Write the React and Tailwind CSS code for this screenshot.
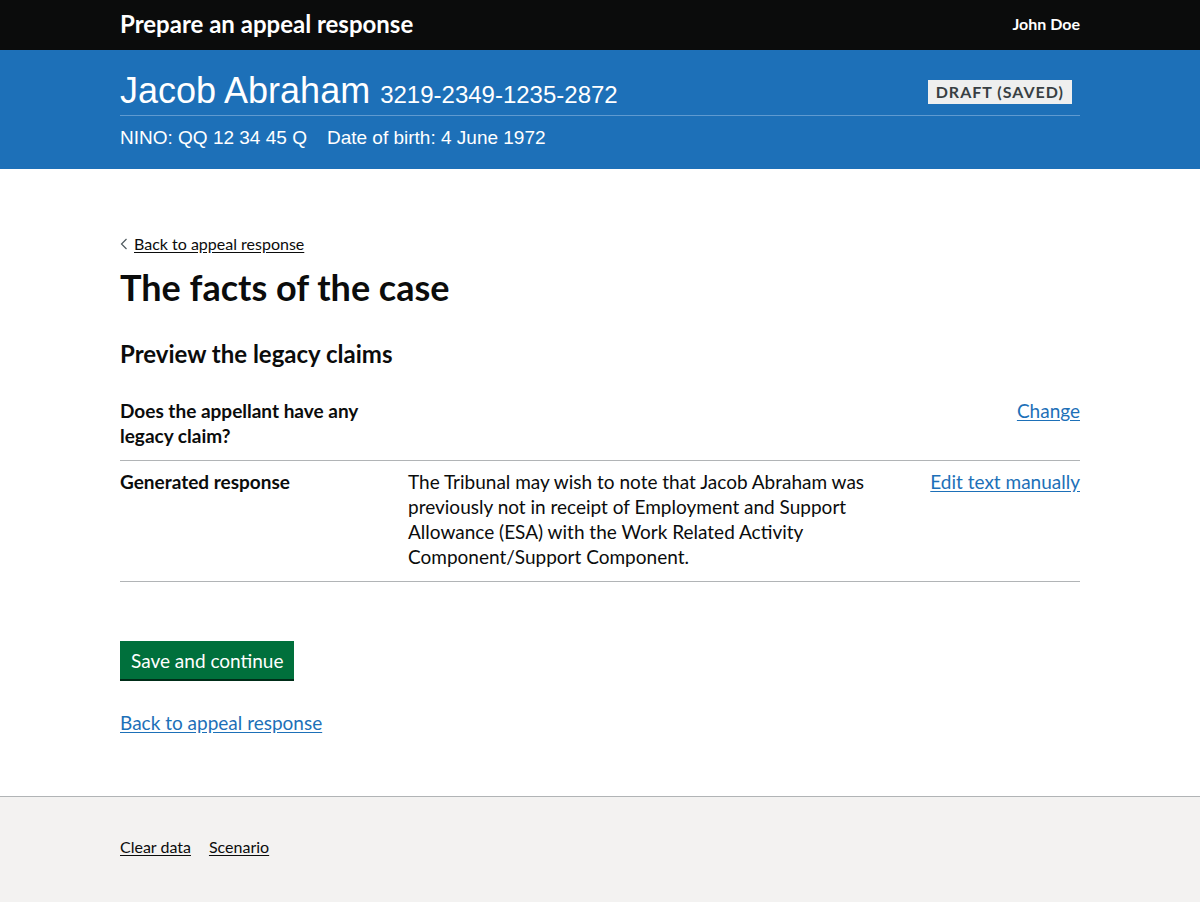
import React from "react";

const body = { fontFamily: "Lato, 'Liberation Sans', Arial, sans-serif" };
const arial = { fontFamily: "'Liberation Sans', Arial, sans-serif" };

const SummaryRow = ({ label, value, action, pad }) => (
    <div className={`flex border-b border-[#b1b4b6] ${pad}`}>
        <dt className="w-[288px] shrink-0 pr-5 text-[19px] leading-[25px] font-bold text-[#0b0c0c]">{label}</dt>
        <dd className="w-[480px] shrink-0 pr-5 text-[19px] leading-[25px] text-[#0b0c0c]">{value}</dd>
        <dd className="flex-1 text-right text-[19px] leading-[25px]">
            <a href="#" className="text-[#1d70b8] underline underline-offset-2">{action}</a>
        </dd>
    </div>
);

const App = () => {
    return (
        <div className="min-h-[902px] flex flex-col bg-white" style={body}>
            <header className="bg-[#0b0c0c] h-[50px]">
                <div className="w-[960px] mx-auto h-full flex items-center justify-between">
                    <span className="text-white font-bold text-[24px] leading-none -mt-[2px]">Prepare an appeal response</span>
                    <span className="text-white font-bold text-[16px] leading-none -mt-[2px]">John Doe</span>
                </div>
            </header>

            <div className="bg-[#1d70b8] h-[119px]" style={arial}>
                <div className="w-[960px] mx-auto pt-[21px]">
                    <div className="flex items-end justify-between h-[45px] pb-[5px] border-b border-[#5f9ad0]">
                        <div className="text-white">
                            <span className="text-[36px] leading-none">Jacob Abraham</span>
                            <span className="text-[24px] leading-none ml-[10px]">3219-2349-1235-2872</span>
                        </div>
                        <span className="mr-2 mb-[6px] bg-[#eeefef] text-[#383f43] font-bold uppercase text-[16px] leading-[24px] px-2 tracking-[1px]" style={body}>
                            Draft (saved)
                        </span>
                    </div>
                    <div className="text-white text-[19px] leading-[25px] pt-[9px]">
                        NINO: QQ 12 34 45 Q<span className="ml-5">Date of birth: 4 June 1972</span>
                    </div>
                </div>
            </div>

            <main className="w-[960px] mx-auto flex-1 pt-[63px] pb-[60px]">
                <a href="#" className="inline-flex items-center text-[16px] leading-[20px] text-[#0b0c0c]">
                    <svg width="8" height="12" viewBox="0 0 8 12" className="mr-[6px]">
                        <path d="M6.5 1 L1.5 6 L6.5 11" fill="none" stroke="#505a5f" strokeWidth="1.2" />
                    </svg>
                    <span className="underline underline-offset-2">Back to appeal response</span>
                </a>
                <h1 className="mt-[11px] text-[36px] leading-[40px] font-bold text-[#0b0c0c]">The facts of the case</h1>
                <h2 className="mt-[32px] text-[24px] leading-[30px] font-bold text-[#0b0c0c]">Preview the legacy claims</h2>

                <dl className="mt-[19px]">
                    <SummaryRow pad="pt-[10px] pb-[12px]" label="Does the appellant have any legacy claim?" value="" action="Change" />
                    <SummaryRow
                        pad="pt-[8px] pb-[12px]"
                        label="Generated response"
                        value="The Tribunal may wish to note that Jacob Abraham was previously not in receipt of Employment and Support Allowance (ESA) with the Work Related Activity Component/Support Component."
                        action="Edit text manually"
                    />
                </dl>

                <button className="mt-[59px] bg-[#00703c] text-white text-[19px] leading-[25px] px-[11px] pt-[7px] pb-[6px] shadow-[0_2px_0_#002d18]">
                    Save and continue
                </button>
                <div className="mt-[31px]">
                    <a href="#" className="text-[#1d70b8] text-[19px] leading-[25px] underline underline-offset-2">Back to appeal response</a>
                </div>
            </main>

            <footer className="bg-[#f3f2f1] border-t border-[#b1b4b6] h-[106px]">
                <div className="w-[960px] mx-auto pt-[40px] flex gap-[18px] text-[16px] leading-[20px]">
                    <a href="#" className="text-[#0b0c0c] underline underline-offset-2">Clear data</a>
                    <a href="#" className="text-[#0b0c0c] underline underline-offset-2">Scenario</a>
                </div>
            </footer>
        </div>
    );
};

export default App;
